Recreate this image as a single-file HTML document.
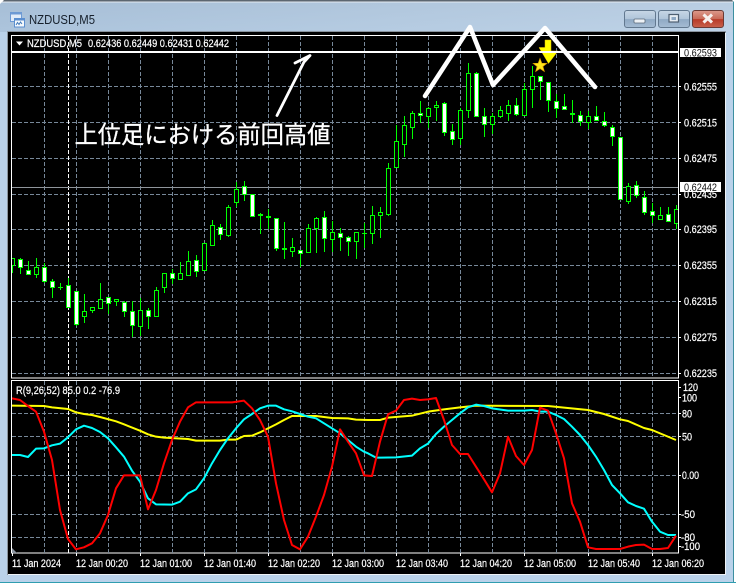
<!DOCTYPE html>
<html><head><meta charset="utf-8"><style>
html,body{margin:0;padding:0;background:#fff}
body{width:736px;height:584px;overflow:hidden;position:relative}
svg{display:block;position:absolute;left:0;top:0}
text{font-family:"Liberation Sans",sans-serif;font-size:11px;fill:#fff;stroke:#fff;stroke-width:.22px}
</style></head><body>
<svg width="736" height="584" viewBox="0 0 736 584">
<defs>
<linearGradient id="tb" x1="0" y1="0" x2="0" y2="1"><stop offset="0" stop-color="#c9d6e3"/><stop offset=".06" stop-color="#a9c0d8"/><stop offset="1" stop-color="#bad2ea"/></linearGradient>
<linearGradient id="tr" x1="0" y1="0" x2="1" y2="0"><stop offset="0" stop-color="#a6bed6" stop-opacity="1"/><stop offset="1" stop-color="#c0d3e6"/></linearGradient>
<linearGradient id="b1" x1="0" y1="0" x2="0" y2="1"><stop offset="0" stop-color="#c8d7e6"/><stop offset=".5" stop-color="#afc4d9"/><stop offset=".52" stop-color="#8fa9c4"/><stop offset="1" stop-color="#a5bcd3"/></linearGradient>
<linearGradient id="b2" x1="0" y1="0" x2="0" y2="1"><stop offset="0" stop-color="#dc9a8c"/><stop offset=".5" stop-color="#c96a58"/><stop offset=".52" stop-color="#b83a28"/><stop offset="1" stop-color="#c8614c"/></linearGradient>
<clipPath id="mc"><rect x="12" y="36" width="666" height="342"/></clipPath>
<clipPath id="ic"><rect x="12" y="381" width="666" height="172"/></clipPath>
</defs>
<rect width="736" height="584" fill="#bad2ea"/>
<rect x="0" y="0" width="736" height="32" fill="url(#tb)"/>
<rect x="0" y="2" width="736" height="30" fill="url(#tr)" opacity=".7"/>
<rect x="0" y="0" width="736" height="1.5" fill="#5c6670"/>
<rect x="0" y="1.5" width="736" height="1" fill="#e4ebf2"/>
<rect x="733" y="0" width="1" height="584" fill="#3c8fa0"/>
<rect x="734" y="0" width="2" height="584" fill="#fff"/>
<rect x="0" y="582" width="736" height="1" fill="#2f9db0"/>
<rect x="0" y="583" width="736" height="1" fill="#fff"/>
<path d="M0 0h4l-4 4z" fill="#fff"/><path d="M736 0h-4l4 4z" fill="#fff"/>

<!-- title icon -->
<rect x="10.500" y="12.500" width="11" height="9" fill="#e2ecf8" stroke="#6d9ad4"/>
<rect x="10.500" y="12.500" width="11" height="2" fill="#6d9ad4"/>
<rect x="14.500" y="18.500" width="10" height="8.500" fill="#f6fafd" stroke="#5b8fd0"/>
<rect x="14.500" y="18.500" width="10" height="2" fill="#5b8fd0"/>
<path d="M16 25l1.500-2.500 1.500 2 1.500-2.500 1.500 2" fill="none" stroke="#3f78ba"/>
<text x="29" y="24" style="font-size:13px;fill:#16202c;stroke:none" textLength="66" lengthAdjust="spacingAndGlyphs">NZDUSD,M5</text>

<!-- window buttons -->
<rect x="624.500" y="10.500" width="31" height="17" rx="2.500" fill="url(#b1)" stroke="#62788f"/>
<rect x="634" y="19" width="11" height="4" rx="1" fill="#eef2f6" stroke="#5a6a7a" stroke-width=".8"/>
<rect x="658.500" y="10.500" width="31" height="17" rx="2.500" fill="url(#b1)" stroke="#62788f"/>
<rect x="669" y="14.500" width="9.500" height="7.500" fill="#e6ecf2" stroke="#4f6072" stroke-width="1.200"/><rect x="671.500" y="17" width="4.500" height="3" fill="#8fa9c4"/>
<rect x="692.500" y="10.500" width="31" height="17" rx="2.500" fill="url(#b2)" stroke="#6b3a35"/>
<path d="M703.500 14.500l8.500 8M712 14.500l-8.500 8" stroke="#f6f0ee" stroke-width="3"/>

<!-- chart frame -->
<rect x="7" y="31" width="719" height="544" fill="#000"/>
<rect x="7.500" y="31.500" width="718" height="543" fill="none" stroke="#8a949e"/>
<path d="M725.500 33V574.500H8" fill="none" stroke="#eef2f6"/>
<rect x="11.500" y="35.500" width="667" height="342.500" fill="none" stroke="#fff"/>
<rect x="11.500" y="380.500" width="667" height="172.500" fill="none" stroke="#fff"/>

<!-- grid main -->
<g fill="none" stroke="#778899" stroke-dasharray="4 2" shape-rendering="crispEdges">
<path d="M12 86.500H678M12 122.500H678M12 158.500H678M12 194.500H678M12 229.500H678M12 265.500H678M12 301.500H678M12 337.500H678M12 373.500H678"/>
<path d="M44.500 36V378M76.500 36V378M108.500 36V378M140.500 36V378M172.500 36V378M204.500 36V378M236.500 36V378M268.500 36V378M300.500 36V378M332.500 36V378M364.500 36V378M396.500 36V378M428.500 36V378M460.500 36V378M492.500 36V378M524.500 36V378M556.500 36V378M588.500 36V378M620.500 36V378M652.500 36V378"/>
<path d="M12 413.500H678M12 436.500H678M12 475.500H678M12 514.500H678M12 537.500H678"/>
<path d="M44.500 381V553M76.500 381V553M108.500 381V553M140.500 381V553M172.500 381V553M204.500 381V553M236.500 381V553M268.500 381V553M300.500 381V553M332.500 381V553M364.500 381V553M396.500 381V553M428.500 381V553M460.500 381V553M492.500 381V553M524.500 381V553M556.500 381V553M588.500 381V553M620.500 381V553M652.500 381V553"/>
</g>
<path d="M68.500 36V378M68.500 381V553" stroke="#fff" stroke-dasharray="4 2" shape-rendering="crispEdges"/>

<!-- yellow arrow & star -->
<path d="M545 40h6v11h7l-9.500 12.500L539 47.500h6z" fill="#ffff00" stroke="#e8c000" stroke-width=".5"/>
<path d="M540 58.500l1.800 4.700 5 .2-3.900 3.100 1.400 4.900-4.300-2.800-4.300 2.800 1.400-4.900-3.900-3.100 5-.2z" fill="#ffe81a" stroke="#e0a000" stroke-width=".7"/>

<!-- levels -->
<rect x="12" y="51" width="666" height="2" fill="#fff"/>
<rect x="12" y="187" width="666" height="1" fill="#8f959b"/>

<!-- candles -->
<g clip-path="url(#mc)" fill="none" stroke="#00ff00" shape-rendering="crispEdges">
<path d="M12.500 258V273M20.500 258V274M28.500 261V274M36.500 258V278M44.500 263V283M52.500 279V298M60.500 283V290M68.500 278V307M76.500 291V326M84.500 294V323M92.500 307V313M100.500 283V309M108.500 297V314M116.500 299V306M124.500 301V317M132.500 301V337M140.500 298V336M148.500 308V329M156.500 287V316M164.500 273V293M172.500 269V284M180.500 262V280M188.500 251V275M196.500 255V277M204.500 243V271M212.500 220V246M220.500 224V240M228.500 205V237M236.500 182V207M244.500 181V201M252.500 194V217M260.500 213V234M268.500 209V229M276.500 218V251M284.500 222V259M292.500 238V257M300.500 250V267M308.500 224V252M316.500 217V253M324.500 211V252M332.500 221V252M340.500 228V251M348.500 236V256M356.500 232V259M364.500 223V248M372.500 206V244M380.500 207V238M388.500 163V216M396.500 125V167M404.500 116V157M412.500 111V139M420.500 101V123M428.500 107V128M436.500 101V121M444.500 102V136M452.500 124V145M460.500 108V145M468.500 63V118M476.500 72V116M484.500 108V137M492.500 113V134M500.500 106V118M508.500 100V121M516.500 98V116M524.500 83V115M532.500 66V108M540.500 76V100M548.500 82V112M556.500 94V118M564.500 94V110M572.500 100V123M580.500 111V126M588.500 111V129M596.500 106V121M604.500 112V127M612.500 125V146M620.500 137V199M628.500 183V204M636.500 181V198M644.500 191V215M652.500 203V223M660.500 207V219M668.500 207V221M676.500 205V229"/>
<path d="M58 287.500h5M258 215.500h5M258 214.500h5M266 217.500h5M266 216.500h5M282 249.500h5M282 248.500h5M362 233.500h5M570 114.500h5M570 113.500h5"/>
<path fill="#000" d="M11.500 258.500h3v7h-3zM34.500 267.500h4v7h-4zM82.500 311.500h4v5h-4zM90.500 307.500h4v3h-4zM98.500 299.500h4v9h-4zM114.500 299.500h4v2h-4zM138.500 310.500h4v16h-4zM154.500 290.500h4v26h-4zM162.500 273.500h4v14h-4zM178.500 273.500h4v6h-4zM186.500 261.500h4v14h-4zM202.500 243.500h4v27h-4zM210.500 225.500h4v20h-4zM226.500 207.500h4v28h-4zM234.500 189.500h4v13h-4zM290.500 247.500h4v4h-4zM306.500 228.500h4v24h-4zM314.500 218.500h4v10h-4zM330.500 232.500h4v7h-4zM354.500 232.500h4v9h-4zM370.500 215.500h4v18h-4zM378.500 212.500h4v3h-4zM386.500 168.500h4v46h-4zM394.500 141.500h4v26h-4zM402.500 125.500h4v19h-4zM410.500 113.500h4v14h-4zM426.500 108.500h4v8h-4zM434.500 105.500h4v2h-4zM458.500 110.500h4v28h-4zM466.500 73.500h4v37h-4zM490.500 116.500h4v8h-4zM498.500 110.500h4v6h-4zM506.500 105.500h4v8h-4zM522.500 89.500h4v26h-4zM530.500 76.500h4v13h-4zM586.500 116.500h4v6h-4zM626.500 186.500h4v15h-4zM658.500 215.500h4v4h-4zM674.500 209.500h4v14h-4z"/>
<path fill="#fff" d="M18.500 259.500h4v8h-4zM26.500 270.500h4v4h-4zM42.500 267.500h4v14h-4zM50.500 281.500h4v6h-4zM66.500 285.500h4v22h-4zM74.500 291.500h4v33h-4zM106.500 297.500h4v6h-4zM122.500 302.500h4v9h-4zM130.500 311.500h4v14h-4zM146.500 310.500h4v6h-4zM170.500 273.500h4v5h-4zM194.500 260.500h4v11h-4zM218.500 227.500h4v7h-4zM242.500 186.500h4v8h-4zM250.500 194.500h4v22h-4zM274.500 218.500h4v30h-4zM298.500 250.500h4v3h-4zM322.500 217.500h4v21h-4zM338.500 233.500h4v4h-4zM346.500 237.500h4v4h-4zM418.500 113.500h4v2h-4zM442.500 103.500h4v29h-4zM450.500 131.500h4v8h-4zM474.500 73.500h4v43h-4zM482.500 116.500h4v8h-4zM514.500 105.500h4v9h-4zM538.500 76.500h4v5h-4zM546.500 82.500h4v18h-4zM554.500 101.500h4v7h-4zM562.500 106.500h4v3h-4zM578.500 115.500h4v6h-4zM594.500 116.500h4v4h-4zM602.500 121.500h4v4h-4zM610.500 127.500h4v9h-4zM618.500 137.500h4v62h-4zM634.500 185.500h4v10h-4zM642.500 197.500h4v15h-4zM650.500 211.500h4v4h-4zM666.500 214.500h4v7h-4z"/>
</g>

<!-- annotations -->
<path d="M425 96L470 27L493 85L545 28L595 87" fill="none" stroke="#fff" stroke-width="4.500" stroke-linejoin="round" stroke-linecap="round"/>
<path d="M277 115.500L304 62L310 55.500L295 63" fill="none" stroke="#fff" stroke-width="2.800" stroke-linejoin="round" stroke-linecap="round"/>
<text x="74.500" y="143" style="font-family:'Liberation Sans','Noto Sans CJK JP',sans-serif;font-size:24px;stroke-width:.3px" textLength="256" lengthAdjust="spacingAndGlyphs">上位足における前回高値</text>

<!-- indicator lines -->
<g clip-path="url(#ic)" fill="none" stroke-linejoin="round">
<g transform="translate(0,370) scale(.33333)" stroke-width="6">
<polyline stroke="#ffff00" points="36,107 132,108 156,112 204,117 228,127 252,132 276,135 300,141 348,154 372,163 420,182 444,193 468,200 492,203 564,207 588,212 660,212 684,209 708,209 732,198 756,197 780,187 804,175 828,163 852,150 876,138 948,138 972,141 996,144 1044,145 1068,149 1104,150 1140,150 1164,143 1236,137 1284,125 1332,118 1380,112 1428,107 1644,108 1692,113 1764,120 1812,132 1860,148 1884,153 1932,174 1956,180 2028,210"/>
<polyline stroke="#00ffff" points="36,255 60,255 84,261 108,236 132,235 156,226 180,221 204,202 228,178 252,167 276,174 300,186 324,205 348,232 372,260 396,302 420,335 444,385 468,403 516,404 540,395 564,370 588,358 612,325 636,280 660,240 684,205 708,175 732,148 756,132 780,115 804,107 828,107 852,118 876,124 900,132 924,140 948,145 972,160 996,175 1020,190 1044,210 1068,230 1092,245 1104,250 1128,263 1188,262 1236,257 1260,235 1284,221 1308,192 1332,170 1356,150 1380,130 1404,112 1428,104 1452,108 1476,115 1524,122 1572,122 1596,120 1620,125 1644,125 1668,135 1692,147 1716,170 1740,195 1764,225 1788,260 1812,300 1836,345 1860,370 1884,397 1908,408 1932,416 1956,455 1980,485 2004,495 2028,495"/>
<polyline stroke="#ff0000" points="36,85 60,90 84,108 108,125 132,185 156,270 180,420 204,507 228,538 252,532 276,520 300,490 324,435 348,355 372,316 420,316 444,418 468,360 492,280 516,210 540,155 564,112 588,97 696,97 732,92 756,115 780,150 804,200 828,340 852,450 876,525 900,538 924,500 948,440 972,375 996,290 1020,178 1044,215 1068,250 1092,316 1116,318 1140,215 1164,133 1188,122 1212,90 1236,86 1260,90 1284,88 1308,84 1332,150 1356,225 1380,252 1404,252 1428,290 1452,328 1476,367 1500,310 1524,200 1548,258 1572,285 1596,240 1620,113 1644,122 1668,190 1692,265 1716,400 1740,455 1764,532 1788,537 1860,537 1884,530 1908,525 1932,524 1956,537 1980,537 2004,534 2028,497"/>
</g>
</g>
<path d="M12 548l5 5h-5z" fill="#8f98a3"/>

<!-- header texts -->
<path d="M16 41.500h7l-3.500 4z" fill="#fff"/>
<text x="27" y="47" textLength="55" lengthAdjust="spacingAndGlyphs">NZDUSD,M5</text>
<text x="88" y="47" textLength="141" lengthAdjust="spacingAndGlyphs">0.62436 0.62449 0.62431 0.62442</text>
<text x="16" y="394" textLength="104" lengthAdjust="spacingAndGlyphs">R(9,26,52) 85.0 0.2 -76.9</text>

<!-- price axis -->
<g>
<path d="M678 86.500h3M678 122.500h3M678 158.500h3M678 194.500h3M678 229.500h3M678 265.500h3M678 301.500h3M678 337.500h3M678 373.500h3M678 387.500h3M678 397.500h3M678 413.500h3M678 436.500h3M678 475.500h3M678 514.500h3M678 537.500h3M678 546.500h3" stroke="#fff" shape-rendering="crispEdges"/>
<text x="684" y="90.500" textLength="33" lengthAdjust="spacingAndGlyphs">0.62555</text>
<text x="684" y="126.500" textLength="33" lengthAdjust="spacingAndGlyphs">0.62515</text>
<text x="684" y="162" textLength="33" lengthAdjust="spacingAndGlyphs">0.62475</text>
<text x="684" y="198" textLength="33" lengthAdjust="spacingAndGlyphs">0.62435</text>
<text x="684" y="233" textLength="33" lengthAdjust="spacingAndGlyphs">0.62395</text>
<text x="684" y="269" textLength="33" lengthAdjust="spacingAndGlyphs">0.62355</text>
<text x="684" y="305" textLength="33" lengthAdjust="spacingAndGlyphs">0.62315</text>
<text x="684" y="341" textLength="33" lengthAdjust="spacingAndGlyphs">0.62275</text>
<text x="684" y="377" textLength="33" lengthAdjust="spacingAndGlyphs">0.62235</text>
<rect x="680" y="48" width="41" height="9" fill="#fff"/>
<text x="684" y="56.500" style="fill:#111;stroke:none" textLength="33" lengthAdjust="spacingAndGlyphs">0.62593</text>
<rect x="680" y="182" width="41" height="10" fill="#fff"/>
<text x="684" y="191" style="fill:#111;stroke:none" textLength="33" lengthAdjust="spacingAndGlyphs">0.62442</text>
<text x="683" y="391" textLength="15" lengthAdjust="spacingAndGlyphs">120</text>
<text x="682" y="401.500" textLength="15" lengthAdjust="spacingAndGlyphs">100</text>
<text x="682" y="417.500" textLength="10" lengthAdjust="spacingAndGlyphs">80</text>
<text x="682" y="440.500" textLength="10" lengthAdjust="spacingAndGlyphs">50</text>
<text x="682" y="479" textLength="17" lengthAdjust="spacingAndGlyphs">0.00</text>
<text x="681" y="518" textLength="14" lengthAdjust="spacingAndGlyphs">-50</text>
<text x="681" y="541" textLength="14" lengthAdjust="spacingAndGlyphs">-80</text>
<text x="681" y="550" textLength="19" lengthAdjust="spacingAndGlyphs">-100</text>
</g>

<!-- time axis -->
<path d="M12.500 553v3M76.500 553v3M140.500 553v3M204.500 553v3M268.500 553v3M332.500 553v3M396.500 553v3M460.500 553v3M524.500 553v3M588.500 553v3M652.500 553v3" stroke="#fff" shape-rendering="crispEdges"/>
<g>
<text x="12" y="567" textLength="49" lengthAdjust="spacingAndGlyphs">11 Jan 2024</text>
<text x="76" y="567" textLength="52" lengthAdjust="spacingAndGlyphs">12 Jan 00:20</text>
<text x="140" y="567" textLength="52" lengthAdjust="spacingAndGlyphs">12 Jan 01:00</text>
<text x="204" y="567" textLength="52" lengthAdjust="spacingAndGlyphs">12 Jan 01:40</text>
<text x="268" y="567" textLength="52" lengthAdjust="spacingAndGlyphs">12 Jan 02:20</text>
<text x="332" y="567" textLength="52" lengthAdjust="spacingAndGlyphs">12 Jan 03:00</text>
<text x="396" y="567" textLength="52" lengthAdjust="spacingAndGlyphs">12 Jan 03:40</text>
<text x="460" y="567" textLength="52" lengthAdjust="spacingAndGlyphs">12 Jan 04:20</text>
<text x="524" y="567" textLength="52" lengthAdjust="spacingAndGlyphs">12 Jan 05:00</text>
<text x="588" y="567" textLength="52" lengthAdjust="spacingAndGlyphs">12 Jan 05:40</text>
<text x="652" y="567" textLength="52" lengthAdjust="spacingAndGlyphs">12 Jan 06:20</text>
</g>
</svg>
</body></html>
